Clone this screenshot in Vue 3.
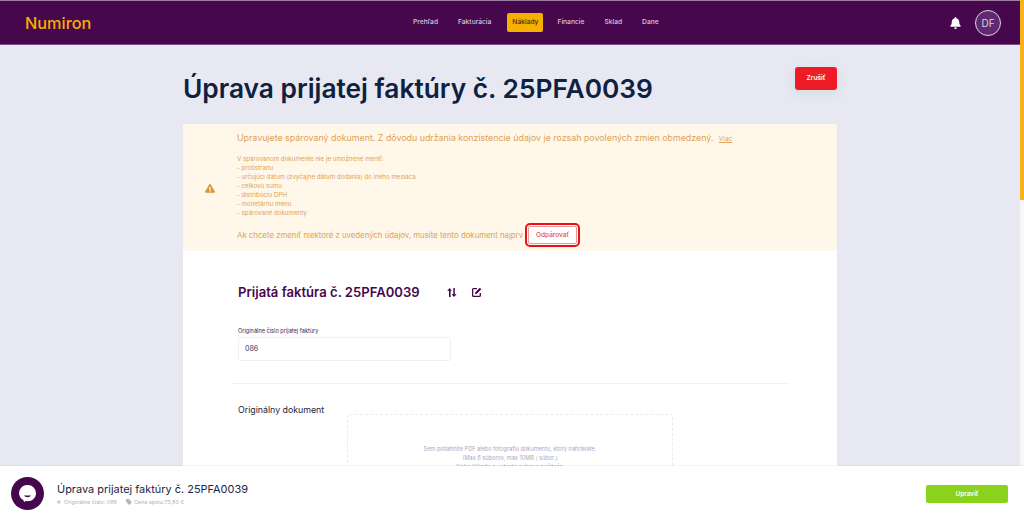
<script setup>
const navItems = [
  { label: 'Prehľad' },
  { label: 'Fakturácia' },
  { label: 'Náklady', active: true },
  { label: 'Financie' },
  { label: 'Sklad' },
  { label: 'Dane' }
]

const lockedFields = [
  'protistranu',
  'určujúci dátum (zvyčajne dátum dodania) do iného mesiaca',
  'celkovú sumu',
  'distribúciu DPH',
  'monetárnu menu',
  'spárované dokumenty'
]
</script>

<template>
  <div class="window">
    <div class="app">
      <header class="topbar">
        <div class="logo">Numiron</div>
        <nav class="nav">
          <a v-for="item in navItems" :key="item.label" class="nav-item" :class="{ active: item.active }">{{ item.label }}</a>
        </nav>
        <div class="top-right">
          <svg class="bell" viewBox="0 0 448 512" width="11" height="12">
            <path fill="#fff" d="M224 512c35 0 64-29 64-64H160c0 35 29 64 64 64zm215-150c-19-21-55-52-55-154 0-78-54-140-128-155V32a32 32 0 0 0-64 0v21C118 68 64 130 64 208c0 102-36 133-55 154-6 6-9 14-9 22 0 16 13 32 32 32h384c19 0 32-16 32-32 0-8-3-16-9-22z" />
          </svg>
          <div class="avatar">DF</div>
        </div>
      </header>

      <main class="main">
        <div class="container">
          <div class="title-row">
            <h1>Úprava prijatej faktúry č. 25PFA0039</h1>
            <button class="btn-cancel">Zrušiť</button>
          </div>

          <section class="alert">
            <div class="alert-icon">
              <svg viewBox="0 0 576 512" width="10" height="9">
                <path fill="#d9973a" d="M569 432c18 32-5 72-42 72H49c-37 0-60-40-42-72L247 24c18-32 65-32 83 0l239 408zM288 346a46 46 0 1 0 0 92 46 46 0 0 0 0-92zm-44-165 7 136c0 6 6 11 12 11h50c6 0 12-5 12-11l7-136c0-7-5-13-12-13h-64c-7 0-12 6-12 13z" />
              </svg>
            </div>
            <div class="alert-body">
              <p class="alert-lead">
                Upravujete spárovaný dokument. Z dôvodu udržania konzistencie údajov je rozsah povolených zmien obmedzený.
                <a class="more">Viac</a>
              </p>
              <div class="alert-list">
                <div>V spárovanom dokumente nie je umožnené meniť:</div>
                <div v-for="field in lockedFields" :key="field">- {{ field }}</div>
              </div>
              <div class="alert-foot">
                <span>Ak chcete zmeniť niektoré z uvedených údajov, musíte tento dokument najprv</span>
                <span class="highlight"><button class="btn-unpair">Odpárovať</button></span>
              </div>
            </div>
          </section>

          <section class="card">
            <div class="card-head">
              <h2>Prijatá faktúra č. 25PFA0039</h2>
              <svg class="swap" viewBox="0 0 10 9" width="10" height="9">
                <path fill="#47074c" d="M2 9V2.700H.2L2.800 0l2 2.700H3.600V9zM6.300 0h1.500v6.300H9.700L7 9 4.600 6.300h1.700z" />
              </svg>
              <svg class="edit" viewBox="0 0 10 10" width="10" height="10">
                <path fill="none" stroke="#47074c" stroke-width="1.300" d="M8.300 6v2.500a.9.900 0 0 1-.9.900H1.500a.9.900 0 0 1-.9-.9V2.600a.9.900 0 0 1 .9-.9H5" />
                <path fill="#47074c" d="M3.400 5.200 7.800.8l1.500 1.500-4.400 4.400-1.900.4z" />
              </svg>
            </div>

            <label class="field-label">Originálne číslo prijatej faktúry</label>
            <div class="field-input">086</div>

            <div class="divider"></div>

            <div class="doc-row">
              <h3>Originálny dokument</h3>
              <div class="dropzone">
                <p>Sem potiahnite PDF alebo fotografiu dokumentu, ktorý nahrávate.</p>
                <p>(Max 6 súborov, max 10MB / súbor.)</p>
                <p>Alebo kliknite a vyberte súbor z počítača.</p>
              </div>
            </div>
          </section>
        </div>
      </main>
    </div>

    <div class="scrollbar"><div class="thumb"></div></div>

    <footer class="footer">
      <div class="chat">
        <svg viewBox="0 0 17 17" width="17" height="17">
          <path fill="#fff" d="M8.500 0a8.300 8.300 0 0 1 8.500 8.200c0 4.500-3.800 8-8.500 8-.6 0-1.200 0-1.700-.1L4.900 17l-.4-1.900A8.100 8.100 0 0 1 0 8.200 8.300 8.300 0 0 1 8.500 0z" />
          <path fill="#47074c" d="M5 10.600h7c-.7 1.100-2 1.600-3.500 1.600S5.700 11.700 5 10.600z" />
        </svg>
      </div>
      <div class="footer-text">
        <div class="footer-title">Úprava prijatej faktúry č. 25PFA0039</div>
        <div class="footer-meta">
          <span class="meta-hash">#</span>
          <span>Originálne číslo: 086</span>
          <svg class="meta-tag" viewBox="0 0 6 6" width="6" height="6">
            <path fill="#b4b4c4" d="M0 0h2.800L6 3.200 3.200 6 0 2.800z" />
          </svg>
          <span>Cena spolu:73,80 €</span>
        </div>
      </div>
      <button class="btn-save">Upraviť</button>
    </footer>
  </div>
</template>

<style>
html, body {
  margin: 0;
  height: 100%;
  overflow: hidden;
}
</style>

<style scoped>
.window {
  position: relative;
  display: flex;
  width: 1024px;
  height: 521px;
  overflow: hidden;
  background: #fff;
  font-family: Inter, "Noto Sans", sans-serif;
}

.app {
  flex: 1;
  min-width: 0;
  display: flex;
  flex-direction: column;
  background: #e8e8f2;
}

.topbar {
  flex: none;
  height: 45px;
  box-sizing: border-box;
  border-top: 1px solid #9a7f9e;
  border-bottom: 1px solid #7d4f84;
  background: #47074c;
  display: flex;
  align-items: center;
  padding: 0 19px 0 25px;
  position: relative;
}

.logo {
  color: #f5b000;
  font-size: 16.300px;
  font-weight: 500;
}

.nav {
  position: absolute;
  left: 406px;
  top: 12px;
  display: flex;
  gap: 6px;
}

.nav-item {
  padding: 0 7px;
  height: 19px;
  line-height: 19px;
  font-size: 6.700px;
  font-weight: 500;
  color: #d8c8dc;
  border-radius: 2px;
}

.nav-item.active {
  margin: 0 1px 0 3px;
  padding: 0 5px;
  background: #f5b000;
  color: #5a2a1c;
}

.top-right {
  margin-left: auto;
  display: flex;
  align-items: center;
  gap: 14px;
}

.avatar {
  width: 26px;
  height: 26px;
  box-sizing: border-box;
  border: 1px solid #e0d4e4;
  border-radius: 50%;
  background: #5f2a70;
  color: #ddd0e2;
  font-size: 10px;
  line-height: 24px;
  text-align: center;
}

.main {
  flex: 1;
  min-height: 0;
  overflow: hidden;
}

.container {
  width: 654px;
  margin: 0 auto;
}

.title-row {
  display: flex;
  justify-content: space-between;
  align-items: flex-start;
  height: 79px;
  padding-top: 22px;
  box-sizing: border-box;
}

h1 {
  margin: 4px 0 0;
  font-size: 26.300px;
  line-height: 35px;
  font-weight: 600;
  color: #0e2141;
  white-space: nowrap;
}

.btn-cancel {
  width: 42px;
  height: 23px;
  border: 0;
  border-radius: 3px;
  background: #ee1c25;
  color: #fff;
  font: 600 6.500px Inter, sans-serif;
  padding: 0 0 2px;
  box-shadow: 0 4px 12px rgba(160, 200, 190, .3);
}

.alert {
  display: flex;
  height: 127px;
  background: #fff7ea;
  color: #dca356;
}

.alert-icon {
  width: 54px;
  display: flex;
  align-items: center;
  justify-content: center;
  padding-top: 1px;
}

.alert-body {
  flex: 1;
  min-width: 0;
}

.alert-lead {
  margin: 8px 0 0;
  font-size: 8.850px;
  line-height: 12px;
}

.more {
  margin-left: 3px;
  font-size: 6.500px;
  text-decoration: underline;
}

.alert-list {
  margin-top: 9px;
  font-size: 6.200px;
  line-height: 9px;
}

.alert-foot {
  display: flex;
  align-items: center;
  margin-top: 6px;
  font-size: 7.800px;
}

.highlight {
  margin-left: 2px;
  padding: 1px;
  border: 2px solid #e8101c;
  border-radius: 5px;
  display: flex;
}

.btn-unpair {
  width: 49px;
  height: 18px;
  padding: 0;
  border: 1px solid #e89a96;
  border-radius: 2px;
  background: #fff;
  color: #e0504e;
  font: 500 6.500px Inter, sans-serif;
}

.card {
  background: #fff;
  padding: 33px 48px 40px 49px;
  height: 300px;
  box-sizing: border-box;
}

.card-head {
  display: flex;
  align-items: center;
  height: 16px;
  padding-left: 6px;
}

h2 {
  margin: 0;
  font-size: 13.100px;
  font-weight: 600;
  color: #47074c;
  white-space: nowrap;
}

.swap {
  margin-left: 27px;
}

.edit {
  margin-left: 15px;
}

.field-label {
  display: block;
  margin: 27px 0 0 6px;
  font-size: 5.600px;
  line-height: 8px;
  color: #3b2a4a;
}

.field-input {
  width: 213px;
  height: 24px;
  box-sizing: border-box;
  margin: 2px 0 0 6px;
  padding-left: 6px;
  border: 1px solid #f0f0f6;
  border-radius: 2px;
  font-size: 7px;
  line-height: 22px;
  color: #3a3a50;
}

.divider {
  margin-top: 22px;
  height: 1px;
  background: #f2f2f6;
}

.doc-row {
  display: flex;
  margin-top: 20px;
  padding-left: 6px;
}

h3 {
  margin: 0;
  width: 109px;
  font-size: 8.800px;
  line-height: 12px;
  font-weight: 400;
  color: #22223c;
  white-space: nowrap;
}

.dropzone {
  width: 326px;
  height: 110px;
  box-sizing: border-box;
  margin-top: 10px;
  padding-top: 30px;
  border: 1px dashed #ebebf3;
  border-radius: 3px;
  text-align: center;
  color: #a8a8c6;
  font-size: 5.600px;
  line-height: 9px;
}

.dropzone p {
  margin: 0;
}

.scrollbar {
  flex: none;
  width: 4px;
  background: #f7f7fb;
}

.thumb {
  height: 200px;
  background: #f9b21c;
}

.footer {
  position: absolute;
  left: 0;
  right: 0;
  bottom: 0;
  height: 55px;
  background: #fff;
  display: flex;
  align-items: center;
  padding: 0 16px 0 11px;
  box-shadow: 0 -1px 1px rgba(40, 40, 80, .04);
}

.chat {
  width: 33px;
  height: 33px;
  border-radius: 50%;
  background: #47074c;
  display: flex;
  align-items: center;
  justify-content: center;
}

.footer-text {
  margin-left: 13px;
  flex: 1;
}

.footer-title {
  font-size: 10.950px;
  line-height: 14px;
  color: #1a2544;
}

.footer-meta {
  display: flex;
  align-items: center;
  margin-top: 3px;
  font-size: 5.450px;
  line-height: 7px;
  color: #b0b0c0;
}

.meta-hash {
  width: 7px;
}

.meta-tag {
  margin: 0 2px 0 9px;
}

.btn-save {
  width: 82px;
  height: 18px;
  padding: 0;
  border: 0;
  border-radius: 2px;
  background: #8ad21c;
  color: #fff;
  font: 600 6.500px Inter, sans-serif;
}
</style>
